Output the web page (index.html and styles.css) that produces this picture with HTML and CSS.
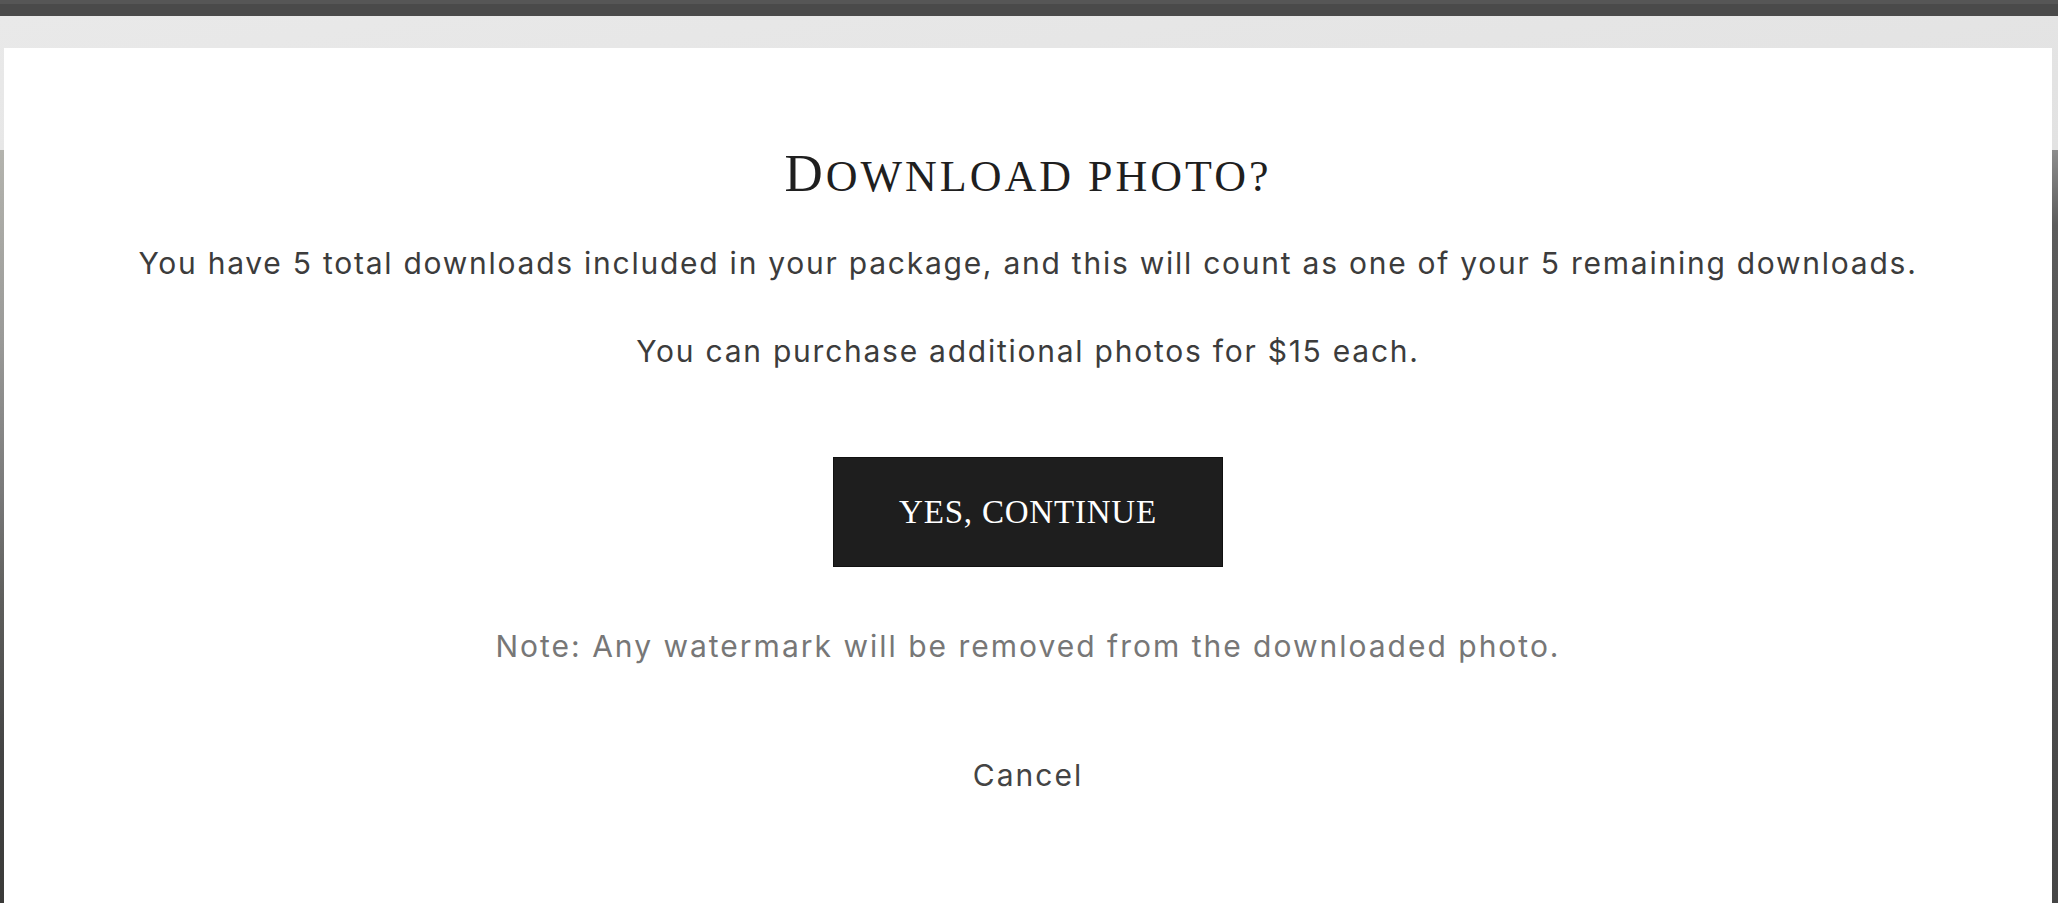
FILE: index.html
```html
<!DOCTYPE html>
<html lang="en">
<head>
<meta charset="utf-8">
<title>Download photo?</title>
<link rel="stylesheet" href="styles.css">
</head>
<body>
<div class="page">
  <div class="topbar"></div>
  <div class="header"></div>
  <div class="photo"></div>
</div>
<div class="modal" role="dialog" aria-labelledby="dl-title">
  <h1 class="title" id="dl-title">Download photo?</h1>
  <p class="text first">You have 5 total downloads included in your package, and this will count as one of your 5 remaining downloads.</p>
  <p class="text second">You can purchase additional photos for $15 each.</p>
  <button class="confirm" type="button">YES, CONTINUE</button>
  <p class="note">Note: Any watermark will be removed from the downloaded photo.</p>
  <a class="cancel" href="#">Cancel</a>
</div>
</body>
</html>
```
FILE: styles.css
```css
* { box-sizing: border-box; }
html, body { margin: 0; padding: 0; height: 100%; }
body { background: #4a4a4a; overflow: hidden; font-family: "Inter", "Liberation Sans", sans-serif; }

.page { display: flex; flex-direction: column; height: 903px; }
.topbar { height: 16px; background: #4a4a4a; border-top: 4px solid #565656; }
.header { height: 134px; background: linear-gradient(170deg, #e9e9e9 0%, #e2e2e2 100%); }
.photo {
  flex: 1;
  background:
    linear-gradient(180deg, #b4b4ae 0%, #9a9a98 25%, #7a7a7a 45%, #5e5e5c 60%, #444 80%, #3a3a38 100%) left top / 50% 100% no-repeat,
    linear-gradient(180deg, #8d8d8d 0%, #5c5c5c 10%, #505050 40%, #464646 100%) right top / 50% 100% no-repeat;
}

.modal {
  position: fixed;
  top: 48px; left: 4px; right: 6px; bottom: 0;
  background: #fff;
  display: flex; flex-direction: column; align-items: center;
  padding-top: 95px;
  text-align: center;
}

.title {
  margin: 0;
  font-family: "Liberation Serif", "Times New Roman", serif;
  font-weight: 400;
  font-size: 44px;
  line-height: 60px;
  letter-spacing: 3px;
  text-transform: uppercase;
  color: #1f1f1f;
}
.title::first-letter { font-size: 53px; }

.text {
  margin: 0;
  font-size: 30px;
  line-height: 40px;
  letter-spacing: 1.75px;
  color: #3c3c3c;
}
.text.first { margin-top: 36px; }
.text.second { margin-top: 48px; }

.confirm {
  margin-top: 86px;
  width: 390px; height: 110px;
  background: #1e1e1e;
  border: 1px solid #111;
  color: #fff;
  font-family: "Liberation Serif", "Times New Roman", serif;
  font-size: 33px;
  letter-spacing: 0.8px;
  padding: 0;
  cursor: pointer;
}

.note {
  margin: 59px 0 0;
  font-size: 30px;
  line-height: 40px;
  letter-spacing: 2px;
  color: #777;
}

.cancel {
  margin-top: 89px;
  font-size: 30px;
  line-height: 40px;
  letter-spacing: 2px;
  color: #444;
  text-decoration: none;
}
```
